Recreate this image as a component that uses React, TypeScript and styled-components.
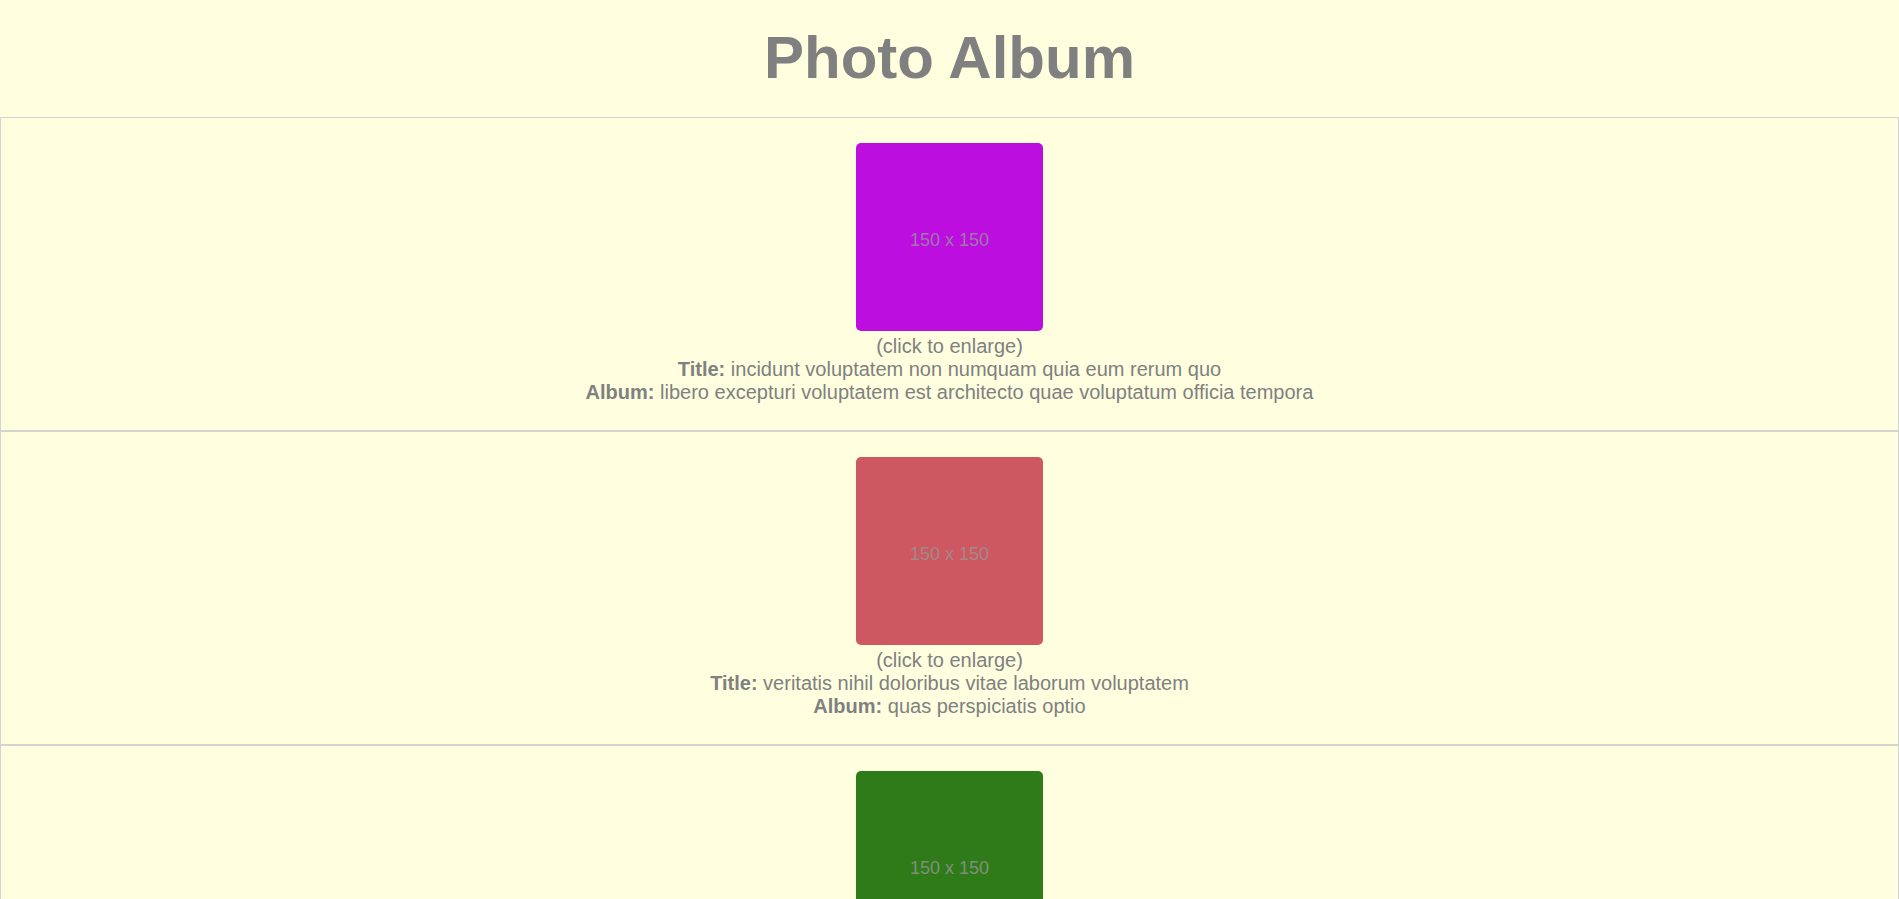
import React from "react";
import styled, { createGlobalStyle } from "styled-components";

const GlobalStyle = createGlobalStyle`
  html, body {
    margin: 0;
    padding: 0;
    background: #ffffe0;
  }
  body {
    font-family: "Liberation Sans", Arial, sans-serif;
    font-size: 20px;
    color: #808080;
  }
`;

const Header = styled.header`
  padding: 24px 0 26px;
  text-align: center;
`;

const Heading = styled.h1`
  margin: 0;
  font-size: 60px;
  font-weight: bold;
  color: #808080;
  line-height: 67px;
`;

const List = styled.main`
  display: block;
`;

const Row = styled.section`
  border: 1px solid #d3d3d3;
  padding: 25px 0 26px;
  text-align: center;
  line-height: 23px;
`;

const Thumb = styled.div<{ $bg: string }>`
  display: flex;
  align-items: center;
  justify-content: center;
  width: 187px;
  height: 188px;
  margin: 0 auto 4px;
  border-radius: 5px;
  background: ${(p) => p.$bg};
  color: rgba(150, 150, 150, 0.8);
  font-size: 18px;
  line-height: 1;
  cursor: pointer;
  padding-top: 5px;
  box-sizing: border-box;
`;

const Hint = styled.div`
  display: block;
`;

const Meta = styled.div`
  display: block;
`;

const Label = styled.b`
  font-weight: bold;
`;

const photos = [
  {
    color: "#bd0ee0",
    title: "incidunt voluptatem non numquam quia eum rerum quo",
    album: "libero excepturi voluptatem est architecto quae voluptatum officia tempora",
  },
  {
    color: "#ce5862",
    title: "veritatis nihil doloribus vitae laborum voluptatem",
    album: "quas perspiciatis optio",
  },
  {
    color: "#2f7b1a",
    title: "accusamus ea aliquid et amet sequi nemo",
    album: "omnis laborum odio",
  },
];

export default function App() {
  return (
    <>
      <GlobalStyle />
      <Header>
        <Heading>Photo Album</Heading>
      </Header>
      <List>
        {photos.map((p, i) => (
          <Row key={i}>
            <Thumb $bg={p.color}>150 x 150</Thumb>
            <Hint>(click to enlarge)</Hint>
            <Meta>
              <Label>Title:</Label> {p.title}
            </Meta>
            <Meta>
              <Label>Album:</Label> {p.album}
            </Meta>
          </Row>
        ))}
      </List>
    </>
  );
}
